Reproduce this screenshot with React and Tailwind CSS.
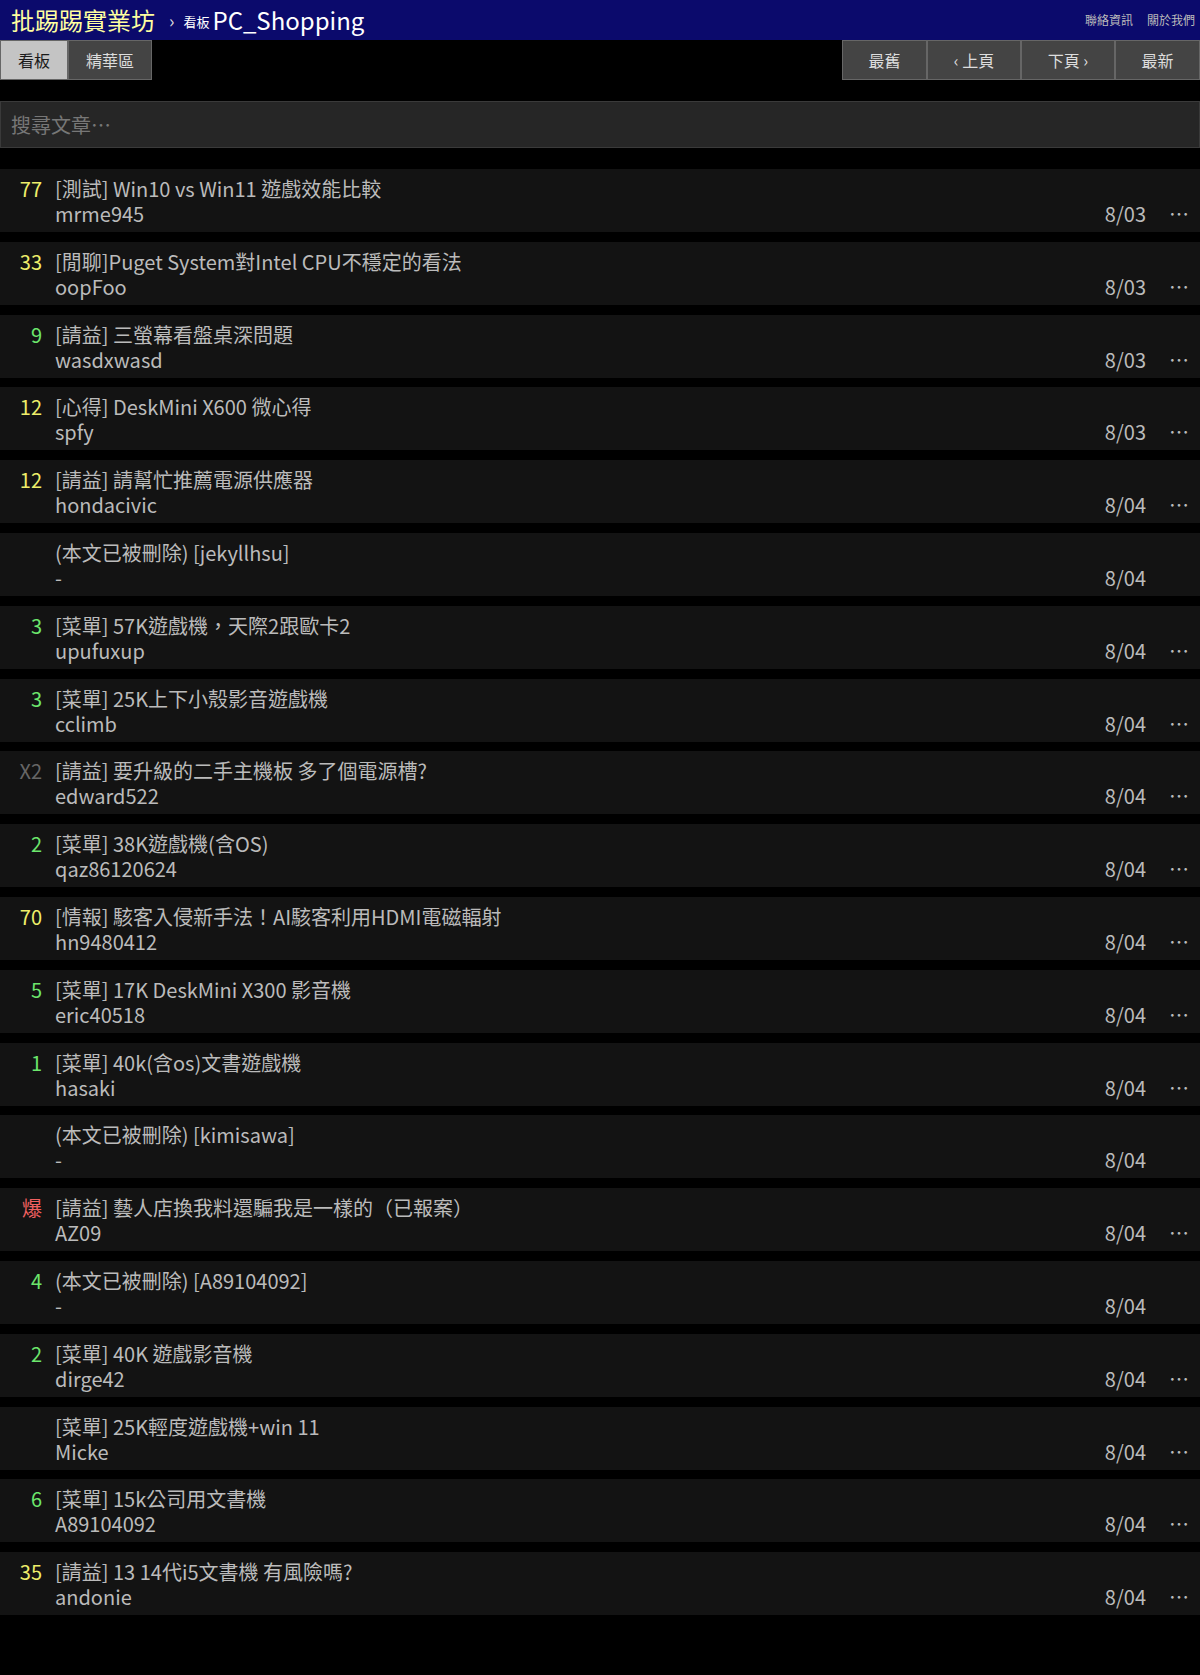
import React from 'react';

const posts = [
  { n: '77', c: 'y', title: '[測試] Win10 vs Win11 遊戲效能比較', author: 'mrme945', date: '8/03', more: true },
  { n: '33', c: 'y', title: '[閒聊]Puget System對Intel CPU不穩定的看法', author: 'oopFoo', date: '8/03', more: true },
  { n: '9', c: 'g', title: '[請益] 三螢幕看盤桌深問題', author: 'wasdxwasd', date: '8/03', more: true },
  { n: '12', c: 'y', title: '[心得] DeskMini X600 微心得', author: 'spfy', date: '8/03', more: true },
  { n: '12', c: 'y', title: '[請益] 請幫忙推薦電源供應器', author: 'hondacivic', date: '8/04', more: true },
  { n: '', c: '', title: '(本文已被刪除) [jekyllhsu]', author: '-', date: '8/04', more: false },
  { n: '3', c: 'g', title: '[菜單] 57K遊戲機，天際2跟歐卡2', author: 'upufuxup', date: '8/04', more: true },
  { n: '3', c: 'g', title: '[菜單] 25K上下小殼影音遊戲機', author: 'cclimb', date: '8/04', more: true },
  { n: 'X2', c: 'x', title: '[請益] 要升級的二手主機板 多了個電源槽?', author: 'edward522', date: '8/04', more: true },
  { n: '2', c: 'g', title: '[菜單] 38K遊戲機(含OS)', author: 'qaz86120624', date: '8/04', more: true },
  { n: '70', c: 'y', title: '[情報] 駭客入侵新手法！AI駭客利用HDMI電磁輻射', author: 'hn9480412', date: '8/04', more: true },
  { n: '5', c: 'g', title: '[菜單] 17K DeskMini X300 影音機', author: 'eric40518', date: '8/04', more: true },
  { n: '1', c: 'g', title: '[菜單] 40k(含os)文書遊戲機', author: 'hasaki', date: '8/04', more: true },
  { n: '', c: '', title: '(本文已被刪除) [kimisawa]', author: '-', date: '8/04', more: false },
  { n: '爆', c: 'r', title: '[請益] 藝人店換我料還騙我是一樣的（已報案）', author: 'AZ09', date: '8/04', more: true },
  { n: '4', c: 'g', title: '(本文已被刪除) [A89104092]', author: '-', date: '8/04', more: false },
  { n: '2', c: 'g', title: '[菜單] 40K 遊戲影音機', author: 'dirge42', date: '8/04', more: true },
  { n: '', c: '', title: '[菜單] 25K輕度遊戲機+win 11', author: 'Micke', date: '8/04', more: true },
  { n: '6', c: 'g', title: '[菜單] 15k公司用文書機', author: 'A89104092', date: '8/04', more: true },
  { n: '35', c: 'y', title: '[請益] 13 14代i5文書機 有風險嗎?', author: 'andonie', date: '8/04', more: true },
];

const numColor = {
  y: 'text-[#eeee6a]',
  g: 'text-[#6ce66c]',
  x: 'text-[#666666]',
  r: 'text-[#f06060]',
  '': '',
};

const PostRow = ({ post }) => (
  <div className="flex h-[63px] bg-[#131313] pt-[7px] text-[20px] leading-[25px] text-[#bbbbbb]">
    <div className={`w-[42px] text-right ${numColor[post.c]}`}>{post.n}</div>
    <div className="ml-[13px] flex-1">
      <div>{post.title}</div>
      <div>{post.author}</div>
    </div>
    <div className="mt-[25px] flex">
      <div>{post.date}</div>
      <div className="ml-[23px] mr-[13px] w-[18px] text-center">{post.more ? '⋯' : ''}</div>
    </div>
  </div>
);

const App = () => {
  return (
    <div className="min-h-[1675px] bg-black font-['Noto_Sans_CJK_TC','Noto_Sans_CJK_SC',sans-serif]">
      {/* Top bar */}
      <div className="flex h-[40px] items-center justify-between bg-[#0b0a6c]">
        <div className="flex items-center">
          <span className="ml-[11px] text-[24px] text-[#ffffa0]">批踢踢實業坊</span>
          <span className="ml-[14px] text-[18px] text-[#dddddd]">›</span>
          <span className="ml-[9px] mt-[4px] text-[13px] text-white">看板</span>
          <span className="ml-[3px] text-[24px] text-white">PC_Shopping</span>
        </div>
        <div className="mr-[5px] flex gap-[14px] text-[12px] text-[#bbbbbb]">
          <span>聯絡資訊</span>
          <span>關於我們</span>
        </div>
      </div>

      {/* Tabs and paging */}
      <div className="flex h-[40px] justify-between text-[16px]">
        <div className="flex">
          <div className="flex items-center border border-[#666666] bg-[#c4c4c4] px-[17px] text-[#1a1a1a]">看板</div>
          <div className="flex items-center border border-[#666666] bg-[#444444] px-[17px] text-[#dddddd]">精華區</div>
        </div>
        <div className="flex text-[#dddddd]">
          <div className="flex w-[85px] items-center justify-center border border-[#666666] bg-[#444444]">最舊</div>
          <div className="flex w-[94px] items-center justify-center border border-[#666666] bg-[#444444]">‹ 上頁</div>
          <div className="flex w-[94px] items-center justify-center border border-[#666666] bg-[#444444]">下頁 ›</div>
          <div className="flex w-[85px] items-center justify-center border border-[#666666] bg-[#444444]">最新</div>
        </div>
      </div>

      {/* Search */}
      <div className="mt-[21px] h-[47px] border border-[#3a3a3a] bg-[#262626]">
        <input
          className="h-full w-full bg-transparent px-[10px] text-[20px] text-[#bbbbbb] outline-none placeholder:text-[#777777]"
          placeholder="搜尋文章⋯"
        />
      </div>

      {/* Post list */}
      <div className="mt-[21px] flex flex-col gap-[9.8px]">
        {posts.map((p, i) => (
          <PostRow key={i} post={p} />
        ))}
      </div>
    </div>
  );
};

export default App;
